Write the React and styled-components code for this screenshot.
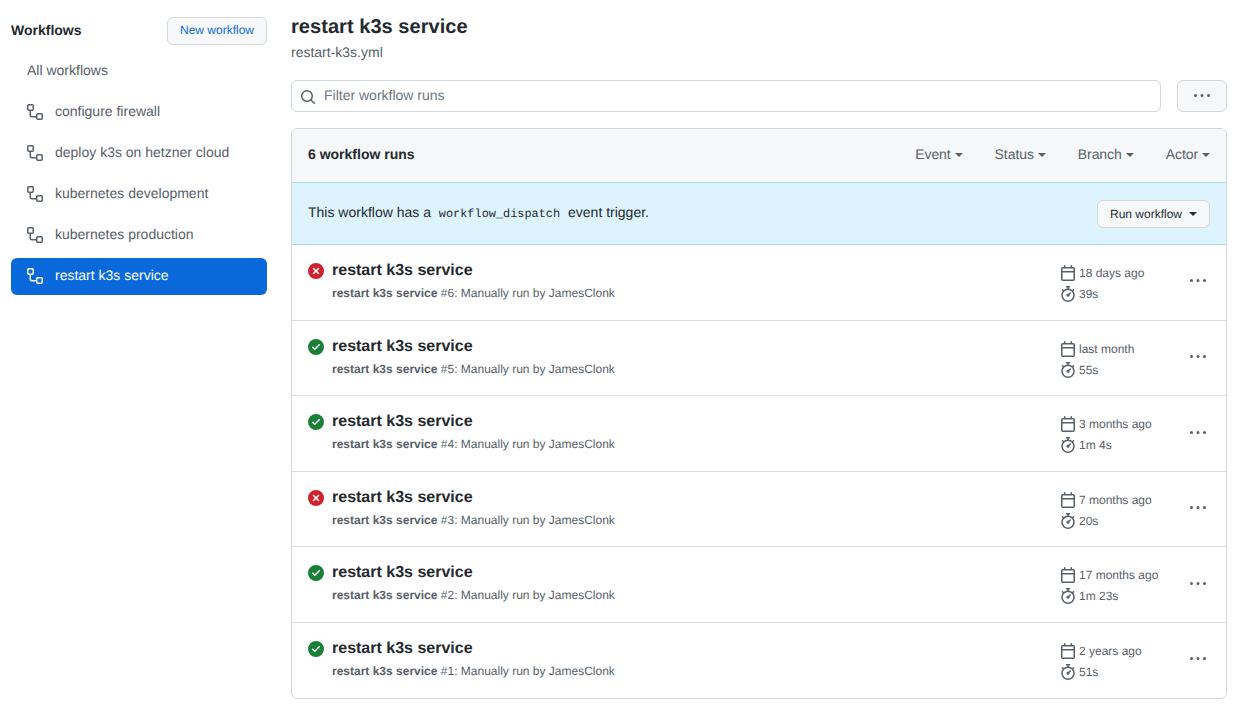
import React from 'react';
import styled, { createGlobalStyle } from 'styled-components';

const GlobalStyle = createGlobalStyle`
  html, body {
    margin: 0;
    padding: 0;
    background: #ffffff;
    font-family: "Liberation Sans", Arial, sans-serif;
    font-size: 14px;
    color: #24292f;
    text-rendering: geometricPrecision;
  }
  * { box-sizing: border-box; }
  button, input { text-rendering: geometricPrecision; }
`;

const ICONS = {
  workflow: 'M0 1.75C0 .784.784 0 1.75 0h3.5C6.216 0 7 .784 7 1.75v3.5A1.75 1.75 0 0 1 5.25 7H4v4a1 1 0 0 0 1 1h4v-1.25C9 9.784 9.784 9 10.75 9h3.5c.966 0 1.75.784 1.75 1.75v3.5A1.75 1.75 0 0 1 14.25 16h-3.5A1.75 1.75 0 0 1 9 14.25v-.75H5A2.5 2.5 0 0 1 2.5 11V7h-.75A1.75 1.75 0 0 1 0 5.25Zm1.75-.25a.25.25 0 0 0-.25.25v3.5c0 .138.112.25.25.25h3.5a.25.25 0 0 0 .25-.25v-3.5a.25.25 0 0 0-.25-.25Zm9 9a.25.25 0 0 0-.25.25v3.5c0 .138.112.25.25.25h3.5a.25.25 0 0 0 .25-.25v-3.5a.25.25 0 0 0-.25-.25Z',
  search: 'M10.68 11.74a6 6 0 0 1-7.922-8.982 6 6 0 0 1 8.982 7.922l3.04 3.04a.749.749 0 0 1-.326 1.275.749.749 0 0 1-.734-.215ZM11.5 7a4.499 4.499 0 1 0-8.997 0A4.499 4.499 0 0 0 11.5 7Z',
  kebab: 'M8 9a1.5 1.5 0 1 0 0-3 1.5 1.5 0 0 0 0 3ZM1.5 9a1.5 1.5 0 1 0 0-3 1.5 1.5 0 0 0 0 3Zm13 0a1.5 1.5 0 1 0 0-3 1.5 1.5 0 0 0 0 3Z',
  calendar: 'M4.75 0a.75.75 0 0 1 .75.75V2h5V.75a.75.75 0 0 1 1.5 0V2h1.25c.966 0 1.75.784 1.75 1.75v10.5A1.75 1.75 0 0 1 13.25 16H2.75A1.75 1.75 0 0 1 1 14.25V3.75C1 2.784 1.784 2 2.75 2H4V.75A.75.75 0 0 1 4.75 0ZM2.5 7.5v6.75c0 .138.112.25.25.25h10.5a.25.25 0 0 0 .25-.25V7.5Zm10.75-4H2.75a.25.25 0 0 0-.25.25V6h11V3.75a.25.25 0 0 0-.25-.25Z',
  stopwatch: 'M5.75.75A.75.75 0 0 1 6.5 0h3a.75.75 0 0 1 0 1.5h-.75v1l-.001.041a6.724 6.724 0 0 1 3.464 1.435l.007-.006.75-.75a.75.75 0 1 1 1.06 1.06l-.75.75-.006.007a6.75 6.75 0 1 1-10.548 0L2.72 5.03l-.75-.75a.75.75 0 0 1 1.06-1.06l.75.75.007.006A6.72 6.72 0 0 1 7.25 2.541V1.5H6.5a.75.75 0 0 1-.75-.75ZM8 14.5a5.25 5.25 0 1 0-.001-10.501A5.25 5.25 0 0 0 8 14.5Zm.389-6.7 1.33-1.33a.75.75 0 1 1 1.061 1.06L9.45 8.861A1.503 1.503 0 0 1 8 10.75a1.499 1.499 0 1 1 .389-2.95Z',
  success: 'M8 16A8 8 0 1 1 8 0a8 8 0 0 1 0 16Zm3.78-9.72a.751.751 0 0 0-.018-1.042.751.751 0 0 0-1.042-.018L6.75 9.19 5.28 7.72a.751.751 0 0 0-1.042.018.751.751 0 0 0-.018 1.042l2 2a.75.75 0 0 0 1.06 0Z',
  failure: 'M2.343 13.657A8 8 0 1 1 13.658 2.343 8 8 0 0 1 2.343 13.657ZM6.03 4.97a.751.751 0 0 0-1.042.018.751.751 0 0 0-.018 1.042L6.94 8 4.97 9.97a.749.749 0 0 0 .326 1.275.749.749 0 0 0 .734-.215L8 9.06l1.97 1.97a.749.749 0 0 0 1.275-.326.749.749 0 0 0-.215-.734L9.06 8l1.97-1.97a.749.749 0 0 0-.326-1.275.749.749 0 0 0-.734.215L8 6.94Z',
};

const Svg = styled.svg`
  display: block;
  flex: none;
  fill: ${props => props.$color || 'currentColor'};
`;

const Icon = ({ name, color, size = 16 }) => (
  <Svg $color={color} width={size} height={size} viewBox="0 0 16 16" aria-hidden="true">
    <path d={ICONS[name]} />
  </Svg>
);

const Page = styled.div`
  display: flex;
  gap: 24px;
  width: 1240px;
  padding: 0 13px 0 11px;
`;

const Sidebar = styled.aside`
  width: 256px;
  flex: none;
`;

const SidebarHead = styled.div`
  display: flex;
  align-items: center;
  justify-content: space-between;
  margin-top: 17px;
  height: 28px;
  margin-bottom: 8px;
`;

const SidebarTitle = styled.h2`
  margin: 0;
  padding-bottom: 2px;
  font-size: 14px;
  line-height: 26px;
  font-weight: 700;
  color: #24292f;
`;

const NewButton = styled.button`
  width: 100px;
  height: 28px;
  padding: 0 0 2px;
  font: 12px/20px "Liberation Sans", Arial, sans-serif;
  color: #0969da;
  background: #f6f8fa;
  border: 1px solid #d5d8da;
  border-radius: 6px;
`;

const NavList = styled.nav`
  display: flex;
  flex-direction: column;
  gap: 4px;
`;

const NavItem = styled.a`
  display: flex;
  align-items: center;
  gap: 12px;
  height: 37px;
  padding: 0 0 1px 16px;
  border-radius: 6px;
  font-size: 14px;
  color: ${props => (props.$active ? '#ffffff' : '#57606a')};
  background: ${props => (props.$active ? '#0969da' : 'transparent')};
`;

const NavLabel = styled.span`
  padding-bottom: 3px;
`;

const Main = styled.main`
  flex: 1;
  min-width: 0;
`;

const Title = styled.h1`
  margin: 0;
  padding-top: 14px;
  font-size: 20px;
  line-height: 26px;
  font-weight: 700;
  letter-spacing: 0.05px;
  color: #24292f;
`;

const FileName = styled.div`
  margin-top: 2px;
  font-size: 14px;
  line-height: 20px;
  color: #57606a;
`;

const FilterRow = styled.div`
  display: flex;
  gap: 16px;
  margin-top: 18px;
`;

const FilterBox = styled.div`
  flex: 1;
  display: flex;
  align-items: center;
  gap: 8px;
  height: 32px;
  padding-left: 8px;
  border: 1px solid #d0d7de;
  border-radius: 6px;
  background: #ffffff;
`;

const SearchIcon = styled.span`
  display: block;
  padding-top: 2px;
  color: #57606a;
`;

const FilterInput = styled.input`
  flex: 1;
  border: 0;
  outline: 0;
  padding: 0 0 3px;
  background: transparent;
  font: 14px/20px "Liberation Sans", Arial, sans-serif;
  color: #24292f;

  &::placeholder {
    color: #6e7781;
    opacity: 1;
  }
`;

const MoreButton = styled.button`
  display: flex;
  align-items: center;
  justify-content: center;
  width: 50px;
  height: 32px;
  padding: 0;
  color: #57606a;
  background: #f6f8fa;
  border: 1px solid #d5d8da;
  border-radius: 6px;
`;

const Card = styled.section`
  margin-top: 16px;
  padding-bottom: 1px;
  border: 1px solid #d0d7de;
  border-radius: 6px;
  overflow: hidden;
`;

const CardHead = styled.div`
  display: flex;
  align-items: center;
  justify-content: space-between;
  height: 53px;
  padding: 0 16px 3px;
  background: #f6f8fa;
`;

const RunCount = styled.div`
  font-size: 14px;
  font-weight: 700;
  color: #24292f;
`;

const Filters = styled.div`
  display: flex;
  gap: 32px;
`;

const FilterMenu = styled.div`
  display: flex;
  align-items: center;
  gap: 4px;
  font-size: 14px;
  letter-spacing: -0.08px;
  color: #57606a;
`;

const Caret = styled.span`
  display: inline-block;
  width: 0;
  height: 0;
  margin-top: 1px;
  border-top: 4px solid ${props => props.$color || '#57606a'};
  border-left: 4px solid transparent;
  border-right: 4px solid transparent;
`;

const Banner = styled.div`
  display: flex;
  align-items: center;
  justify-content: space-between;
  height: 63px;
  padding: 0 16px;
  background: #ddf4ff;
  border-top: 1px solid #a2dcfe;
  border-bottom: 1px solid #a2dcfe;
  font-size: 14px;
  color: #24292f;
`;

const BannerText = styled.div`
  padding-bottom: 2px;
`;

const Code = styled.code`
  margin: 0 4px;
  font-family: "Liberation Mono", monospace;
  font-size: 11.9px;
`;

const RunButton = styled.button`
  display: flex;
  align-items: center;
  gap: 7px;
  height: 28px;
  padding: 0 12px;
  font: 12px/20px "Liberation Sans", Arial, sans-serif;
  color: #24292f;
  background: #f6f8fa;
  border: 1px solid #d5d8da;
  border-radius: 6px;
`;

const RunRow = styled.div`
  display: flex;
  height: ${props => (props.$first ? '75px' : '75.45px')};
  padding: ${props => (props.$first ? '14px' : '13.9px')} 20px 0 16px;
  border-top: ${props => (props.$first ? '0' : '1px solid #d8dee4')};
`;

const StatusIcon = styled.div`
  padding-top: 4px;
  margin-right: 8px;
`;

const RunInfo = styled.div`
  flex: 1;
  min-width: 0;
`;

const RunTitle = styled.div`
  font-size: 16px;
  line-height: 24px;
  font-weight: 700;
  color: #24292f;
`;

const RunSub = styled.div`
  margin-top: 1px;
  font-size: 12px;
  line-height: 18px;
  color: #57606a;

  b {
    font-weight: 700;
  }
`;

const Meta = styled.div`
  width: 130px;
  flex: none;
  padding-top: 5.45px;
  display: flex;
  flex-direction: column;
  gap: 4px;
`;

const MetaLine = styled.div`
  display: flex;
  align-items: center;
  gap: 3px;
  height: 17px;
  font-size: 12px;
  color: #57606a;
`;

const RowMenu = styled.div`
  padding-top: 14.4px;
  color: #57606a;
`;

const workflows = [
  'configure firewall',
  'deploy k3s on hetzner cloud',
  'kubernetes development',
  'kubernetes production',
  'restart k3s service',
];

const runs = [
  { id: 6, status: 'failure', when: '18 days ago', took: '39s' },
  { id: 5, status: 'success', when: 'last month', took: '55s' },
  { id: 4, status: 'success', when: '3 months ago', took: '1m 4s' },
  { id: 3, status: 'failure', when: '7 months ago', took: '20s' },
  { id: 2, status: 'success', when: '17 months ago', took: '1m 23s' },
  { id: 1, status: 'success', when: '2 years ago', took: '51s' },
];

export default function App() {
  return (
    <>
      <GlobalStyle />
      <Page>
        <Sidebar>
          <SidebarHead>
            <SidebarTitle>Workflows</SidebarTitle>
            <NewButton>New workflow</NewButton>
          </SidebarHead>
          <NavList>
            <NavItem><NavLabel>All workflows</NavLabel></NavItem>
            {workflows.map(name => (
              <NavItem key={name} $active={name === 'restart k3s service'}>
                <Icon name="workflow" />
                <NavLabel>{name}</NavLabel>
              </NavItem>
            ))}
          </NavList>
        </Sidebar>
        <Main>
          <Title>restart k3s service</Title>
          <FileName>restart-k3s.yml</FileName>
          <FilterRow>
            <FilterBox>
              <SearchIcon><Icon name="search" /></SearchIcon>
              <FilterInput placeholder="Filter workflow runs" />
            </FilterBox>
            <MoreButton><Icon name="kebab" /></MoreButton>
          </FilterRow>
          <Card>
            <CardHead>
              <RunCount>6 workflow runs</RunCount>
              <Filters>
                {['Event', 'Status', 'Branch', 'Actor'].map(label => (
                  <FilterMenu key={label}>
                    {label}
                    <Caret />
                  </FilterMenu>
                ))}
              </Filters>
            </CardHead>
            <Banner>
              <BannerText>
                This workflow has a <Code>workflow_dispatch</Code> event trigger.
              </BannerText>
              <RunButton>
                Run workflow
                <Caret $color="#24292f" />
              </RunButton>
            </Banner>
            {runs.map((run, i) => (
              <RunRow key={run.id} $first={i === 0}>
                <StatusIcon>
                  <Icon
                    name={run.status}
                    color={run.status === 'success' ? '#1a7f37' : '#cf222e'}
                  />
                </StatusIcon>
                <RunInfo>
                  <RunTitle>restart k3s service</RunTitle>
                  <RunSub>
                    <b>restart k3s service</b> #{run.id}: Manually run by JamesClonk
                  </RunSub>
                </RunInfo>
                <Meta>
                  <MetaLine><Icon name="calendar" />{run.when}</MetaLine>
                  <MetaLine><Icon name="stopwatch" />{run.took}</MetaLine>
                </Meta>
                <RowMenu><Icon name="kebab" /></RowMenu>
              </RunRow>
            ))}
          </Card>
        </Main>
      </Page>
    </>
  );
}
